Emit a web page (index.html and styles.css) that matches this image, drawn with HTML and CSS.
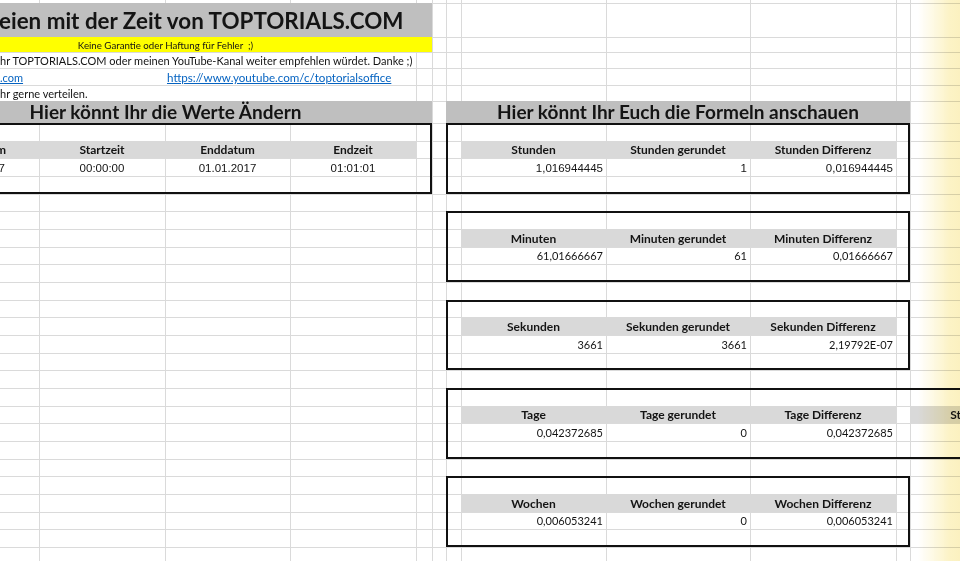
FILE: index.html
```html
<!DOCTYPE html>
<html lang="de">
<head>
<meta charset="utf-8">
<title>Spielereien mit der Zeit</title>
<link rel="stylesheet" href="styles.css">
</head>
<body>
<div class="sheet">
  <div class="cell title r2 span-AE">eien mit der Zeit von TOPTORIALS.COM</div>
  <div class="cell notice r3 span-AE">Keine Garantie oder Haftung für Fehler&nbsp; ;)</div>
  <div class="cell text r4 span-AD">hr TOPTORIALS.COM oder meinen YouTube-Kanal weiter empfehlen würdet. Danke ;)</div>
  <div class="cell text r5 span-AD"><a href="#">.com</a></div>
  <div class="cell link2 r5 span-CE"><a href="#">https://www.youtube.com/c/toptorialsoffice</a></div>
  <div class="cell text r6 span-AD">hr gerne verteilen.</div>
  <div class="cell section sec-left r7 span-AE">Hier könnt Ihr die Werte Ändern</div>
  <div class="cell section sec-right r7 span-GK">Hier könnt Ihr Euch die Formeln anschauen</div>

  <!-- Eingabe -->
  <div class="cell hd r9 cA">Startdatum</div>
  <div class="cell hd r9 cB">Startzeit</div>
  <div class="cell hd r9 cC">Enddatum</div>
  <div class="cell hd r9 cD">Endzeit</div>
  <div class="cell val arial ctr r10 cA">01.01.2017</div>
  <div class="cell val arial ctr r10 cB">00:00:00</div>
  <div class="cell val arial ctr r10 cC">01.01.2017</div>
  <div class="cell val arial ctr r10 cD">01:01:01</div>
  <div class="box b1 span-AE"></div>

  <!-- Stunden -->
  <div class="cell hd r9 cH">Stunden</div>
  <div class="cell hd r9 cI">Stunden gerundet</div>
  <div class="cell hd r9 cJ">Stunden Differenz</div>
  <div class="cell val arial num r10 cH">1,016944445</div>
  <div class="cell val arial num r10 cI">1</div>
  <div class="cell val arial num r10 cJ">0,016944445</div>
  <div class="box b1 span-GK"></div>

  <!-- Minuten -->
  <div class="cell hd r14 cH">Minuten</div>
  <div class="cell hd r14 cI">Minuten gerundet</div>
  <div class="cell hd r14 cJ">Minuten Differenz</div>
  <div class="cell val num r15 cH">61,01666667</div>
  <div class="cell val num r15 cI">61</div>
  <div class="cell val num r15 cJ">0,01666667</div>
  <div class="box b2 span-GK"></div>

  <!-- Sekunden -->
  <div class="cell hd r19 cH">Sekunden</div>
  <div class="cell hd r19 cI">Sekunden gerundet</div>
  <div class="cell hd r19 cJ">Sekunden Differenz</div>
  <div class="cell val num r20 cH">3661</div>
  <div class="cell val num r20 cI">3661</div>
  <div class="cell val num r20 cJ">2,19792E-07</div>
  <div class="box b3 span-GK"></div>

  <!-- Tage -->
  <div class="cell hd r24 cH">Tage</div>
  <div class="cell hd r24 cI">Tage gerundet</div>
  <div class="cell hd r24 cJ">Tage Differenz</div>
  <div class="cell hd r24 cL">Stunden gesamt</div>
  <div class="cell val num r25 cH">0,042372685</div>
  <div class="cell val num r25 cI">0</div>
  <div class="cell val num r25 cJ">0,042372685</div>
  <div class="box b4 span-Gend"></div>

  <!-- Wochen -->
  <div class="cell hd r29 cH">Wochen</div>
  <div class="cell hd r29 cI">Wochen gerundet</div>
  <div class="cell hd r29 cJ">Wochen Differenz</div>
  <div class="cell val num r30 cH">0,006053241</div>
  <div class="cell val num r30 cI">0</div>
  <div class="cell val num r30 cJ">0,006053241</div>
  <div class="box b5 span-GK"></div>
</div>
<div class="edge-glow"></div>
</body>
</html>
```

FILE: styles.css
```css
html, body {
  margin: 0;
  padding: 0;
}

body {
  width: 960px;
  height: 561px;
  overflow: hidden;
  position: relative;
  background: #fff;
  font-family: "Lato", "Open Sans", sans-serif;
  color: #141414;
}

.sheet {
  display: grid;
  margin-left: -87px;
  width: 1163px;
  grid-template-columns: 126px 126px 125px 126px 16px 14px 15px 145px 144px 146px 14px 166px;
  grid-template-rows: 3px 34px 15px 16px 17px 16px 22px repeat(9, 18px 17px 18px);
  background-color: #fff;
  background-image:
    linear-gradient(#dadada, #dadada),
    linear-gradient(#dadada, #dadada),
    linear-gradient(#dadada, #dadada),
    linear-gradient(#dadada, #dadada),
    linear-gradient(#dadada, #dadada),
    linear-gradient(#dadada, #dadada),
    linear-gradient(#dadada, #dadada),
    linear-gradient(#dadada, #dadada),
    linear-gradient(#dadada, #dadada),
    linear-gradient(#dadada, #dadada),
    linear-gradient(#dadada, #dadada),
    linear-gradient(#dadada, #dadada),
    linear-gradient(#dadada, #dadada),
    linear-gradient(#dadada, #dadada),
    linear-gradient(#dadada, #dadada),
    linear-gradient(#dadada, #dadada),
    linear-gradient(#dadada, #dadada),
    repeating-linear-gradient(to bottom,
      #dadada 0 1px, transparent 1px 18px,
      #dadada 18px 19px, transparent 19px 35px,
      #dadada 35px 36px, transparent 36px 53px);
  background-size:
    1px 100%, 1px 100%, 1px 100%, 1px 100%, 1px 100%, 1px 100%,
    1px 100%, 1px 100%, 1px 100%, 1px 100%, 1px 100%,
    100% 1px, 100% 1px, 100% 1px, 100% 1px, 100% 1px, 100% 1px,
    100% calc(100% - 123px);
  background-position:
    126px 0, 252px 0, 377px 0, 503px 0, 519px 0, 533px 0,
    548px 0, 693px 0, 837px 0, 983px 0, 997px 0,
    0 3px, 0 37px, 0 52px, 0 68px, 0 85px, 0 101px,
    0 123px;
  background-repeat: no-repeat;
}

/* grid placement */
.r2 { grid-row: 2; }
.r3 { grid-row: 3; }
.r4 { grid-row: 4; }
.r5 { grid-row: 5; }
.r6 { grid-row: 6; }
.r7 { grid-row: 7; }
.r9 { grid-row: 9; }
.r10 { grid-row: 10; }
.r14 { grid-row: 14; }
.r15 { grid-row: 15; }
.r19 { grid-row: 19; }
.r20 { grid-row: 20; }
.r24 { grid-row: 24; }
.r25 { grid-row: 25; }
.r29 { grid-row: 29; }
.r30 { grid-row: 30; }

.b1 { grid-row: 8 / 12; }
.b2 { grid-row: 13 / 17; }
.b3 { grid-row: 18 / 22; }
.b4 { grid-row: 23 / 27; }
.b5 { grid-row: 28 / 32; }

.cA { grid-column: 1; }
.cB { grid-column: 2; }
.cC { grid-column: 3; }
.cD { grid-column: 4; }
.cH { grid-column: 8; }
.cI { grid-column: 9; }
.cJ { grid-column: 10; }
.cL { grid-column: 12; }

.span-AE { grid-column: 1 / 6; }
.span-AD { grid-column: 1 / 5; }
.span-CE { grid-column: 3 / 6; }
.span-GK { grid-column: 7 / 12; }
.span-Gend { grid-column: 7 / 13; }

/* cells */
.cell {
  display: flex;
  align-items: center;
  min-width: 0;
  white-space: nowrap;
}

.title {
  background: #bfbfbf;
  font-weight: 700;
  font-size: 22.4px;
  padding-left: 86px;
  padding-top: 1px;
}

.notice {
  background: #ffff00;
  justify-content: center;
  padding-right: 14px;
  font-size: 9.7px;
}

.text {
  background: #fff;
  border-top: 1px solid #dadada;
  padding-left: 87px;
  font-size: 11px;
  align-items: flex-end;
  padding-bottom: 1px;
}

.link2 {
  padding-left: 2px;
  font-size: 11.6px;
  align-items: flex-end;
  padding-bottom: 1px;
}

a {
  color: #0563c1;
  text-decoration: underline;
}

.section {
  background: #bfbfbf;
  font-weight: 700;
  font-size: 19px;
  justify-content: center;
  align-items: flex-end;
}

.sec-left {
  padding-right: 14px;
}

.hd {
  background: #d9d9d9;
  font-weight: 700;
  font-size: 12px;
  justify-content: center;
  align-items: flex-end;
  padding-bottom: 1px;
}

.val {
  font-size: 11px;
  align-items: flex-end;
  padding-bottom: 2px;
}

.arial {
  font-family: "Liberation Sans", Arial, sans-serif;
  font-size: 11.5px;
}

.ctr {
  justify-content: center;
}

.num {
  justify-content: flex-end;
  padding-right: 3px;
}

.box {
  border: 2px solid #111;
  pointer-events: none;
}

.edge-glow {
  position: absolute;
  top: 0;
  right: 0;
  width: 42px;
  height: 100%;
  background: linear-gradient(to right, rgba(252, 244, 200, 0), #fcf3c6 75%, #fbf1c0);
  mix-blend-mode: multiply;
  pointer-events: none;
}
```
